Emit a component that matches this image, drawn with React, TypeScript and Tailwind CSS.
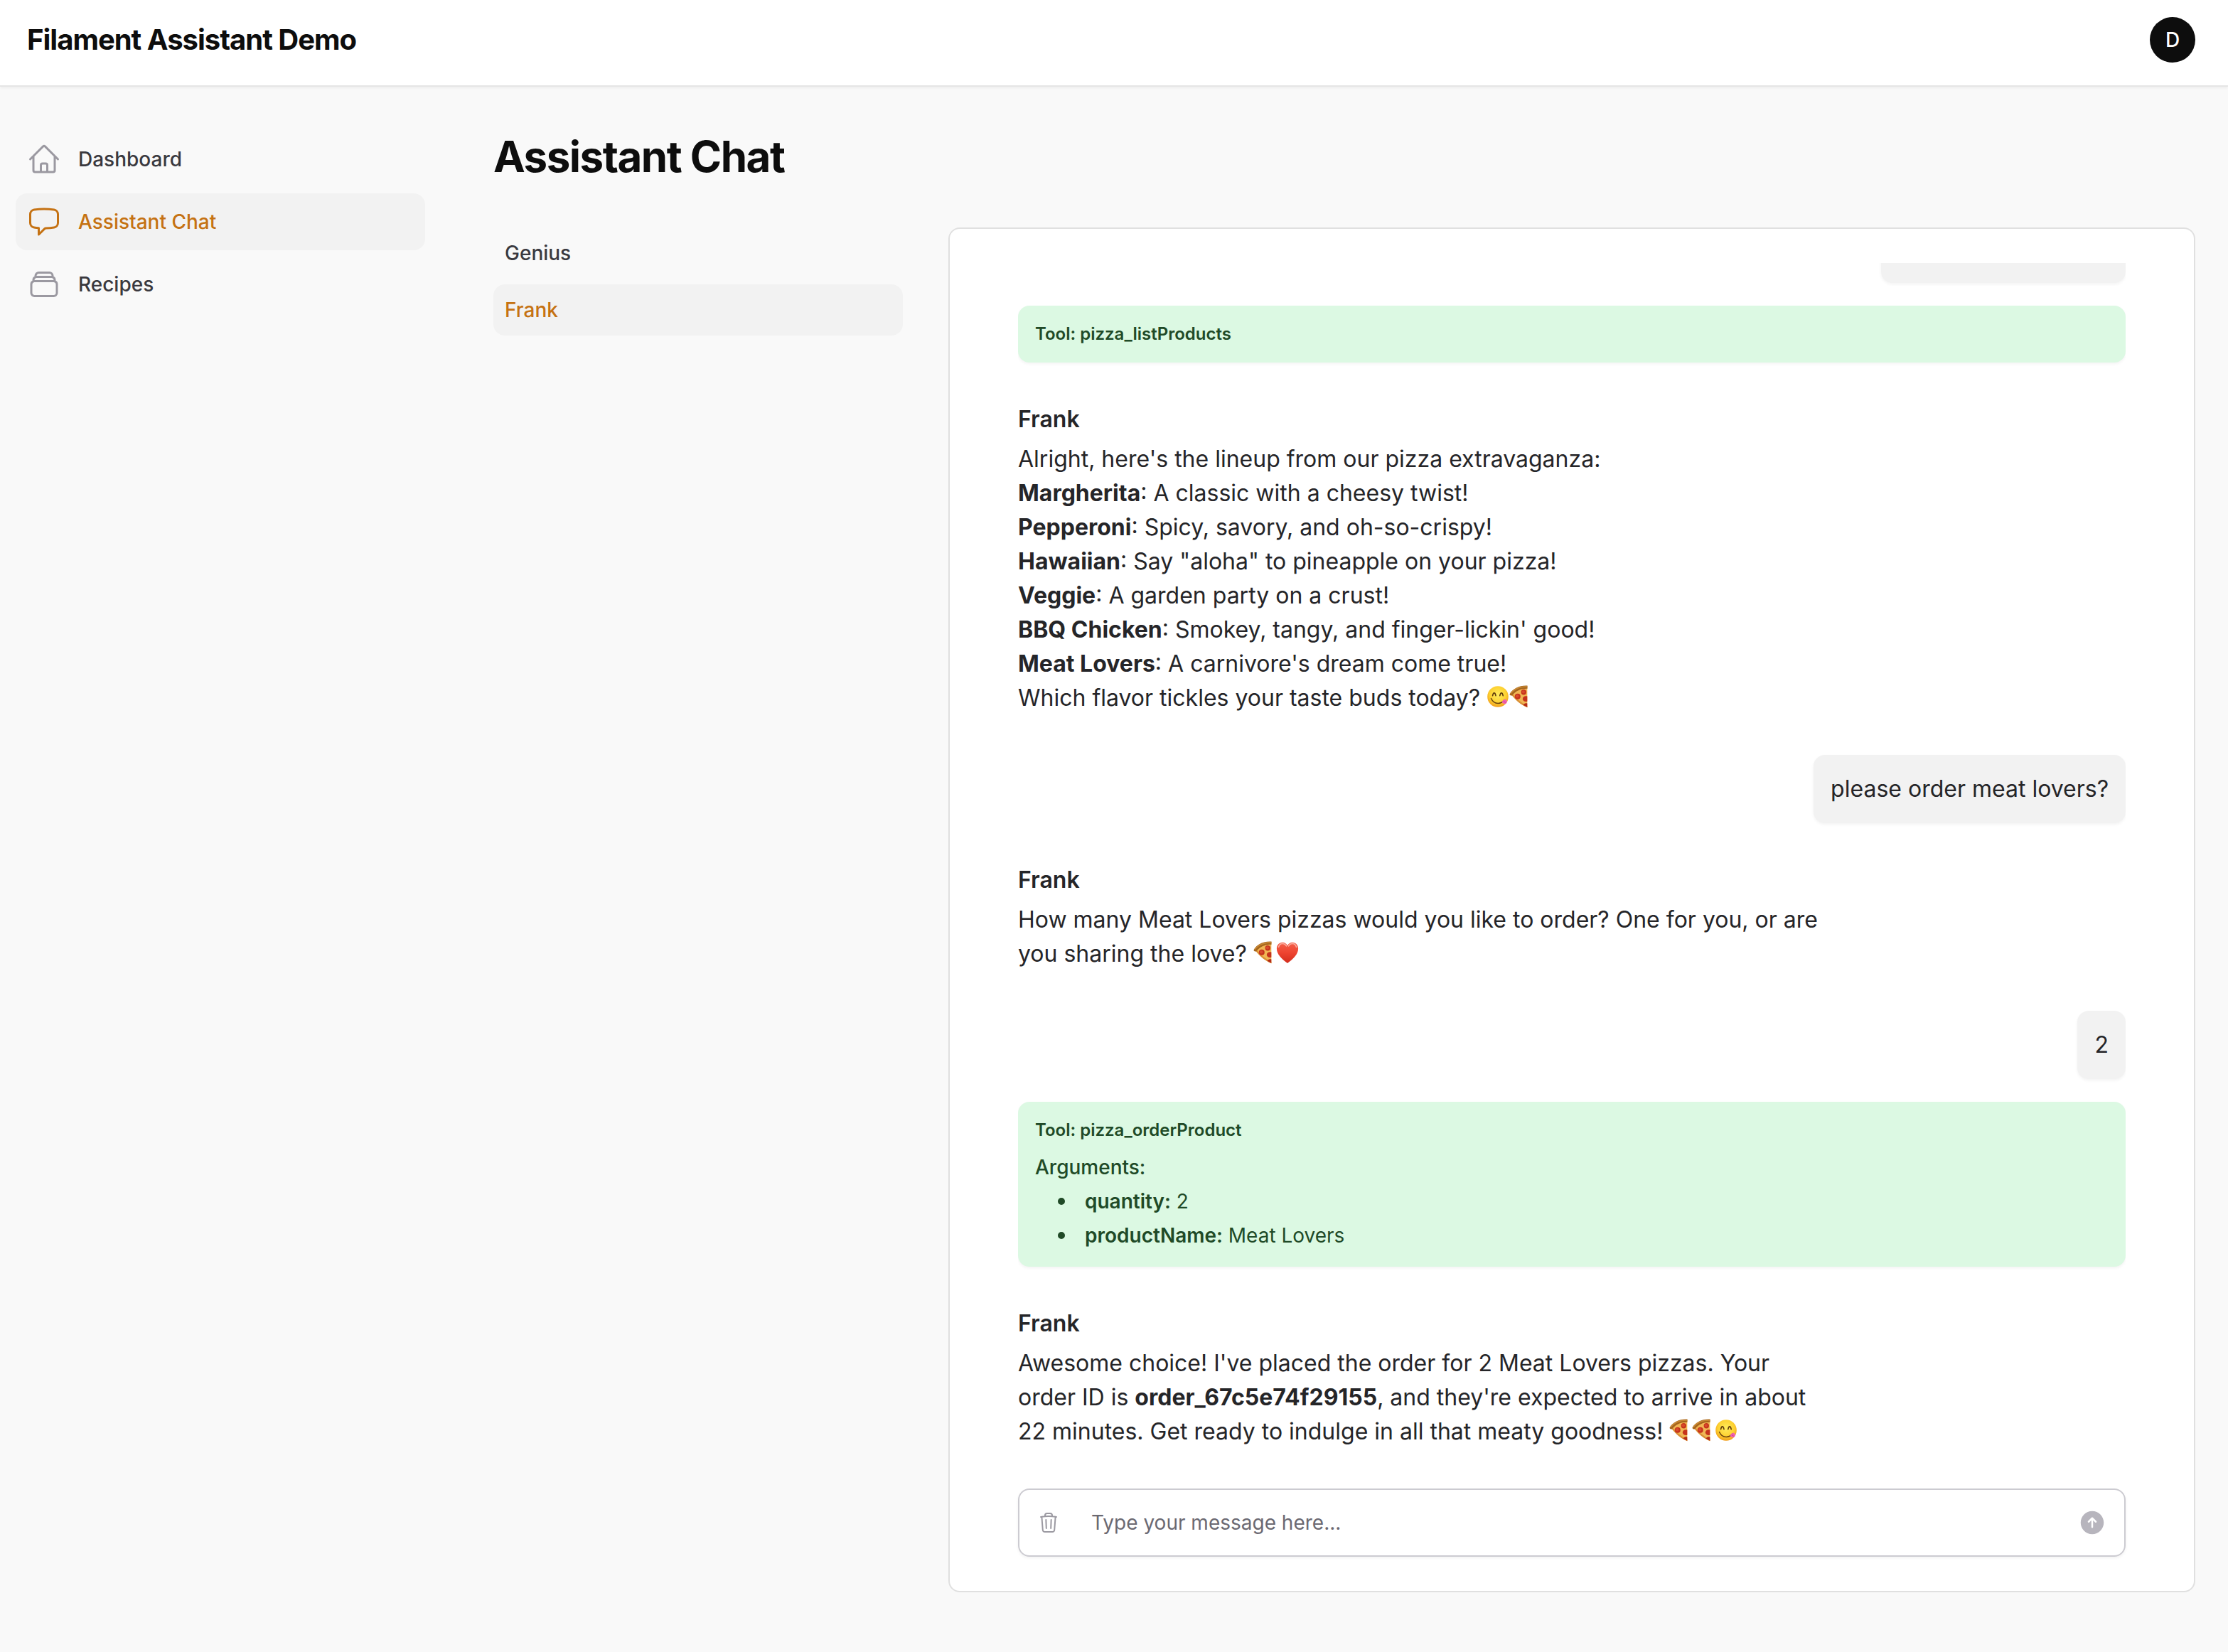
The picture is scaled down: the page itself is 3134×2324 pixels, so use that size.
import type { ReactNode } from "react";
import {
  HiArrowUpCircle,
  HiOutlineChatBubbleLeft,
  HiOutlineHome,
  HiOutlineRectangleStack,
  HiOutlineTrash,
} from "react-icons/hi2";

const emojiClass = "inline-block size-8 align-[-3px]";

function YumEmoji() {
  return (
    <svg viewBox="0 0 32 32" className={emojiClass} role="img" aria-label="face savoring food">
      <defs>
        <radialGradient id="yum" cx="0.5" cy="0.4" r="0.6">
          <stop offset="0" stopColor="#ffec5c" />
          <stop offset="0.65" stopColor="#fdd131" />
          <stop offset="1" stopColor="#f09d1b" />
        </radialGradient>
      </defs>
      <circle cx="16" cy="16" r="14.8" fill="url(#yum)" />
      <path d="M8.6 14.6c.5-2.6 1.3-3.7 2.2-3.7s1.7 1.1 2.2 3.7" fill="none" stroke="#5f3a0c" strokeWidth="1.6" strokeLinecap="round" />
      <path d="M18.8 14.6c.5-2.6 1.3-3.7 2.2-3.7s1.7 1.1 2.2 3.7" fill="none" stroke="#5f3a0c" strokeWidth="1.6" strokeLinecap="round" />
      <path d="M6.5 18.5c2 4.7 5.500 6.900 9.700 6.900 3.400 0 6.400-1.400 8.600-4.400" fill="none" stroke="#6b430f" strokeWidth="1.5" strokeLinecap="round" />
      <path d="M21.6 23.3c1-1.800 2.400-3.100 4.400-3.900 2 .6 3.300 2.300 2.900 4.100-.4 1.900-2.300 3-4.200 2.600-1.600-.4-2.700-1.400-3.100-2.800z" fill="#f062b0" />
      <path d="M24.2 22.7l2.3 1.5" stroke="#c93d8a" strokeWidth="0.9" strokeLinecap="round" />
    </svg>
  );
}

function PizzaEmoji() {
  return (
    <svg viewBox="0 0 32 32" className={emojiClass} role="img" aria-label="pizza">
      <path d="M2.5 12.5C8 5.5 16 2.3 25.3 2.6V31.2C17 27.5 8.5 20.5 2.5 12.5z" fill="#f0b654" />
      <path d="M3.8 14.2C10 22 17 27.8 25.3 31.2v-2.3C18 25.5 11 20 5.5 13z" fill="#d98f35" />
      <path d="M.5 12.4C5 4.5 14.5-.1 25.5.5v4.3C16.5 4.6 9 7.7 4 14.5c-1.8.4-3.2-.6-3.5-2.1z" fill="#a5651d" />
      <path d="M1.2 11.5C6 4.5 14.5.9 25.5 1.4v1.3C15.5 2.500 7.500 5.600 2.600 12z" fill="#c98a35" />
      <circle cx="11.8" cy="15.8" r="4" fill="#c5331c" />
      <circle cx="20.3" cy="9.8" r="3.7" fill="#c5331c" />
      <path d="M25.3 15.6v7.2c-3 1-6.300-.4-6.400-3.500 0-3.400 3.500-4.900 6.400-3.700z" fill="#c5331c" />
      <path d="M25.3 25.6v5.2c-2-.8-4-1.900-5.700-3 1-2.200 3.500-3.200 5.700-2.200z" fill="#b52b17" />
      <circle cx="11.2" cy="15.2" r="2.3" fill="#d84a2c" />
      <circle cx="19.9" cy="9.3" r="2.1" fill="#d84a2c" />
    </svg>
  );
}

function HeartEmoji() {
  return (
    <svg viewBox="0 0 32 32" className={emojiClass} role="img" aria-label="red heart">
      <defs>
        <linearGradient id="heart" x1="0" y1="0" x2="0" y2="1">
          <stop offset="0" stopColor="#f4604a" />
          <stop offset="0.5" stopColor="#ee4430" />
          <stop offset="1" stopColor="#d22c1c" />
        </linearGradient>
      </defs>
      <path d="M16 6.3C14.5 3.3 12 1.8 9 1.8 4.3 1.8.9 5.5.9 10.5.9 18.5 8 25 16 31c8-6 15.1-12.5 15.1-20.5 0-5-3.4-8.700-8.100-8.700-3 0-5.500 1.500-7 4.500z" fill="url(#heart)" />
      <path d="M3.5 8.2C4.5 5 6.6 3.5 9 3.5s4.3 1.2 5.5 3.4" fill="none" stroke="#fbb0a2" strokeWidth="1.6" strokeLinecap="round" />
      <path d="M17.5 6.9C18.7 4.7 20.6 3.5 23 3.5s4.5 1.5 5.5 4.7" fill="none" stroke="#fbb0a2" strokeWidth="1.6" strokeLinecap="round" />
    </svg>
  );
}

const navItems = [
  { label: "Dashboard", Icon: HiOutlineHome, active: false },
  { label: "Assistant Chat", Icon: HiOutlineChatBubbleLeft, active: true },
  { label: "Recipes", Icon: HiOutlineRectangleStack, active: false },
];

const assistants = [
  { label: "Genius", active: false },
  { label: "Frank", active: true },
];

const pizzas = [
  ["Margherita", "A classic with a cheesy twist!"],
  ["Pepperoni", "Spicy, savory, and oh-so-crispy!"],
  ["Hawaiian", 'Say "aloha" to pineapple on your pizza!'],
  ["Veggie", "A garden party on a crust!"],
  ["BBQ Chicken", "Smokey, tangy, and finger-lickin' good!"],
  ["Meat Lovers", "A carnivore's dream come true!"],
];

const toolArguments = [
  ["quantity", "2"],
  ["productName", "Meat Lovers"],
];

const softShadow = "shadow-[0_2px_4px_rgba(0,0,0,0.05)]";

function AssistantMessage({ children }: { children: ReactNode }) {
  return (
    <article className="max-w-3/4 py-6 pr-6">
      <h2 className="mb-2 font-semibold">Frank</h2>
      {children}
    </article>
  );
}

function UserMessage({ children }: { children: ReactNode }) {
  return <p className={`self-end rounded-2xl bg-[#f2f2f2] p-6 ${softShadow}`}>{children}</p>;
}

function ToolCall({ name, args = [] }: { name: string; args?: string[][] }) {
  return (
    <section className={`rounded-2xl bg-[#dcf9e3] px-6 pt-6 text-[#204a27] ${args.length ? "pb-5" : "pb-6"} ${softShadow}`}>
      <h3 className="text-2xl/8 font-semibold">Tool: {name}</h3>
      {args.length > 0 && (
        <div className="mt-3 text-[28px]/12">
          <p className="font-medium">Arguments:</p>
          <ul className="pl-8">
            {args.map(([key, value]) => (
              <li key={key} className="flex items-center gap-7">
                <span className="size-2.5 rounded-full bg-[#204a27]" />
                <span>
                  <strong className="font-semibold">{key}:</strong> {value}
                </span>
              </li>
            ))}
          </ul>
        </div>
      )}
    </section>
  );
}

export default function App() {
  return (
    <div className="flex h-screen flex-col bg-[#f9f9f9] font-['Inter',sans-serif] text-[#252528] antialiased [font-optical-sizing:none]">
      <header className={`flex items-center justify-between border-b-2 border-[#e5e5e5] bg-white pt-6 pr-[46px] pb-8 pl-[38px] ${softShadow}`}>
        <a href="#" className="text-[40px]/14 font-bold tracking-tight text-[#0d0d0d]">
          Filament Assistant Demo
        </a>
        <button type="button" aria-label="User menu" className="size-16 rounded-full bg-[#0d0d0d] text-[28px] font-medium text-white">
          D
        </button>
      </header>

      <div className="flex min-h-0 flex-1 gap-24 pt-[62px] pr-[46px] pb-[84px] pl-[22px]">
        <nav aria-label="Main" className="flex w-[576px] shrink-0 flex-col gap-2">
          {navItems.map(({ label, Icon, active }) => (
            <a
              key={label}
              href="#"
              className={`flex items-center gap-6 rounded-2xl p-4 text-[28px]/12 font-medium ${
                active ? "bg-[#f2f2f2] text-[#c57213]" : "text-[#3a393f]"
              }`}
            >
              <Icon className={`size-12 ${active ? "text-[#c57213]" : "text-[#9b99a1]"}`} />
              {label}
            </a>
          ))}
        </nav>

        <main className="flex min-w-0 flex-1 flex-col gap-16">
          <h1 className="text-6xl/18 font-bold tracking-tight text-[#0d0d0d]">Assistant Chat</h1>

          <div className="flex min-h-0 flex-1 gap-16">
            <nav aria-label="Assistants" className="flex w-[576px] shrink-0 flex-col gap-2">
              {assistants.map(({ label, active }) => (
                <a
                  key={label}
                  href="#"
                  className={`rounded-2xl p-4 text-[28px]/10 font-medium ${
                    active ? "bg-[#f2f2f2] text-[#c57213]" : "text-[#3a393f]"
                  }`}
                >
                  {label}
                </a>
              ))}
            </nav>

            <div className="flex min-w-0 flex-1 flex-col gap-8 rounded-2xl border-2 border-[#e0e0e0] bg-white px-24 py-12">
              <div className="flex min-h-0 flex-1 flex-col justify-end overflow-hidden text-[32px]/12">
                <div className="flex flex-col gap-8">
                  <div className={`h-24 w-[344px] self-end rounded-2xl bg-[#f2f2f2] ${softShadow}`} />

                  <ToolCall name="pizza_listProducts" />

                  <AssistantMessage>
                    <p>Alright, here's the lineup from our pizza extravaganza:</p>
                    <ul>
                      {pizzas.map(([name, text]) => (
                        <li key={name}>
                          <strong className="font-bold">{name}</strong>: {text}
                        </li>
                      ))}
                    </ul>
                    <p>
                      Which flavor tickles your taste buds today? <YumEmoji />
                      <PizzaEmoji />
                    </p>
                  </AssistantMessage>

                  <UserMessage>please order meat lovers?</UserMessage>

                  <AssistantMessage>
                    <p>
                      How many Meat Lovers pizzas would you like to order? One for you, or are you sharing the love?{" "}
                      <PizzaEmoji />
                      <HeartEmoji />
                    </p>
                  </AssistantMessage>

                  <UserMessage>2</UserMessage>

                  <ToolCall name="pizza_orderProduct" args={toolArguments} />

                  <AssistantMessage>
                    <p>
                      Awesome choice! I've placed the order for 2 Meat Lovers pizzas. Your order ID is{" "}
                      <strong className="font-bold">order_67c5e74f29155</strong>, and they're expected to arrive in
                      about 22 minutes. Get ready to indulge in all that meaty goodness! <PizzaEmoji />
                      <PizzaEmoji />
                      <YumEmoji />
                    </p>
                  </AssistantMessage>
                </div>
              </div>

              <form
                className={`flex h-24 shrink-0 items-center rounded-2xl border-2 border-[#cccbd1] px-[25px] ${softShadow}`}
                onSubmit={(event) => event.preventDefault()}
              >
                <button type="button" aria-label="Clear conversation" className="text-[#9b99a1]">
                  <HiOutlineTrash className="size-8" />
                </button>
                <input
                  type="text"
                  aria-label="Message"
                  placeholder="Type your message here..."
                  className="ml-11 min-w-0 flex-1 bg-transparent text-[28px]/12 outline-none placeholder:text-[#6b6972]"
                />
                <button type="submit" aria-label="Send message" className="text-[#b7b5bd]">
                  <HiArrowUpCircle className="size-10" />
                </button>
              </form>
            </div>
          </div>
        </main>
      </div>
    </div>
  );
}
